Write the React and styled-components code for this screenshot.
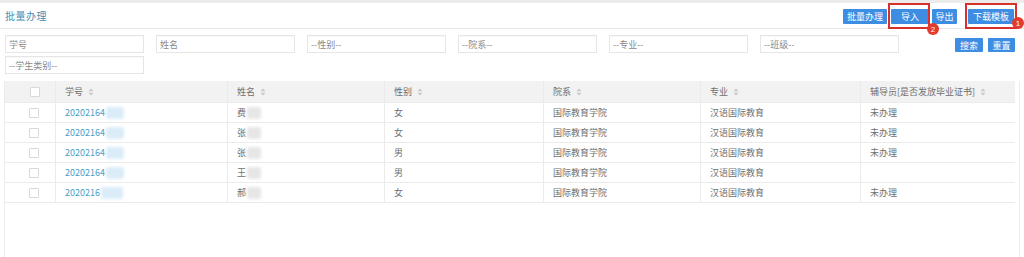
import React from 'react';
import styled, { createGlobalStyle } from 'styled-components';

const GlobalStyle = createGlobalStyle`
  body {
    margin: 0;
    background: #fff;
    font-family: "Noto Sans CJK SC", "Noto Sans", sans-serif;
    color: #707070;
  }
`;

const Page = styled.div`
  width: 1024px;
  height: 257px;
  overflow: hidden;
  display: flex;
  flex-direction: column;
`;

const TopStrip = styled.div`
  height: 3px;
  background: #ebebeb;
`;

const Header = styled.div`
  height: 25px;
  display: flex;
  align-items: center;
  justify-content: space-between;
  padding: 0 10px 0 5px;
  border-bottom: 1px solid #e8e8e8;
`;

const Title = styled.div`
  font-size: 10px;
  color: #4a8db3;
  letter-spacing: 0.5px;
`;

const Actions = styled.div`
  display: flex;
  align-items: center;
  margin-top: 2px;
`;

const Button = styled.button`
  height: ${(p) => p.$h || 15}px;
  width: ${(p) => p.$w}px;
  margin-left: ${(p) => p.$ml || 0}px;
  padding: 0;
  border: none;
  border-radius: 1px;
  background: #3d8de3;
  color: #fff;
  font-family: inherit;
  font-size: 9px;
  line-height: 1;
  display: flex;
  align-items: center;
  justify-content: center;
`;

const Marked = styled.div`
  position: relative;
  margin-left: ${(p) => p.$ml || 0}px;
  display: flex;
`;

const Frame = styled.div`
  position: absolute;
  left: -3px;
  right: ${(p) => p.$r}px;
  top: -6px;
  bottom: -5px;
  border: 2px solid #d8302b;
  pointer-events: none;
`;

const Badge = styled.div`
  position: absolute;
  right: -10px;
  top: ${(p) => p.$t}px;
  width: 12px;
  height: 12px;
  border-radius: 50%;
  background: #e23a2f;
  color: #fff;
  font-size: 8px;
  font-family: "Liberation Sans", sans-serif;
  display: flex;
  align-items: center;
  justify-content: center;
`;

const Filters = styled.div`
  padding: 6px 9px 0 5px;
  display: flex;
  flex-direction: column;
  gap: 3px;
`;

const FilterRow = styled.div`
  display: flex;
  align-items: center;
  gap: 12px;
`;

const Field = styled.div`
  width: 139px;
  height: 18px;
  box-sizing: border-box;
  border: 1px solid #e6e6e6;
  box-shadow: inset 0 1px 1px rgba(0, 0, 0, 0.03);
  padding-left: 3px;
  font-size: 9px;
  color: #8a8a8a;
  display: flex;
  align-items: center;
`;

const SearchGroup = styled.div`
  display: flex;
  gap: 5px;
  margin-left: auto;
  margin-top: 2px;
`;

const TablePanel = styled.div`
  flex: 1;
  margin: 7px 4px 0 4px;
  border-left: 1px solid #ececec;
  border-right: 1px solid #ececec;
`;

const Table = styled.div`
  width: 1010px;
  border-bottom: 1px solid #eaeaea;
`;

const Row = styled.div`
  display: grid;
  grid-template-columns: 50px 172px 157px 159px 157px 160px 155px;
  height: ${(p) => (p.$head ? 21 : 20)}px;
  background: ${(p) => (p.$head ? '#f2f2f2' : '#fff')};
  border-top: ${(p) => (p.$head ? 'none' : '1px solid #ebebeb')};
  box-sizing: border-box;
`;

const Cell = styled.div`
  display: flex;
  align-items: center;
  padding-left: ${(p) => (p.$center ? 0 : 9)}px;
  justify-content: ${(p) => (p.$center ? 'center' : 'flex-start')};
  border-left: ${(p) => (p.$first ? 'none' : '1px solid #ebebeb')};
  font-size: 9px;
  color: ${(p) => (p.$link ? '#45a0c8' : '#6e6e6e')};
  white-space: nowrap;
`;

const Check = styled.span`
  width: 10px;
  height: 10px;
  box-sizing: border-box;
  border: 1px solid #d8d8d8;
  border-radius: 1px;
  background: #fff;
  margin-left: ${(p) => (p.$head ? 10 : 8)}px;
`;

const Smudge = styled.span`
  display: inline-block;
  width: ${(p) => p.$w}px;
  height: 12px;
  margin-left: 1px;
  border-radius: 3px;
  background: ${(p) => (p.$blue ? '#dbecf9' : '#e6e6e6')};
  filter: blur(1.5px);
`;

const SortIcon = () => (
  <svg width="6" height="8" viewBox="0 0 6 8" style={{ marginLeft: 5 }}>
    <path d="M3 0.5 L5.5 3.2 H0.5 Z" fill="#c8c8c8" />
    <path d="M3 7.5 L5.5 4.8 H0.5 Z" fill="#c8c8c8" />
  </svg>
);

const columns = ['学号', '姓名', '性别', '院系', '专业', '辅导员[是否发放毕业证书]'];

const students = [
  { id: '20202164', name: '费', sex: '女', status: '未办理' },
  { id: '20202164', name: '张', sex: '女', status: '未办理' },
  { id: '20202164', name: '张', sex: '男', status: '未办理' },
  { id: '20202164', name: '王', sex: '男', status: '' },
  { id: '2020216', name: '郝', sex: '女', status: '未办理' },
];

const App = () => {
  return (
    <Page>
      <GlobalStyle />
      <TopStrip />
      <Header>
        <Title>批量办理</Title>
        <Actions>
          <Button $w={44}>批量办理</Button>
          <Marked $ml={4}>
            <Button $w={38}>导入</Button>
            <Frame $r={-1} />
            <Badge $t={14}>2</Badge>
          </Marked>
          <Button $w={25} $ml={3}>导出</Button>
          <Marked $ml={11}>
            <Button $w={46}>下载模板</Button>
            <Frame $r={-3} />
            <Badge $t={8}>1</Badge>
          </Marked>
        </Actions>
      </Header>
      <Filters>
        <FilterRow>
          <Field>学号</Field>
          <Field>姓名</Field>
          <Field>--性别--</Field>
          <Field>--院系--</Field>
          <Field>--专业--</Field>
          <Field>--班级--</Field>
          <SearchGroup>
            <Button $w={28} $h={14}>搜索</Button>
            <Button $w={27} $h={14}>重置</Button>
          </SearchGroup>
        </FilterRow>
        <FilterRow>
          <Field>--学生类别--</Field>
        </FilterRow>
      </Filters>
      <TablePanel>
        <Table>
          <Row $head>
            <Cell $first $center>
              <Check $head />
            </Cell>
            {columns.map((c) => (
              <Cell key={c}>
                {c}
                <SortIcon />
              </Cell>
            ))}
          </Row>
          {students.map((s, i) => (
            <Row key={i}>
              <Cell $first $center>
                <Check />
              </Cell>
              <Cell $link>
                {s.id}
                <Smudge $blue $w={s.id.length === 8 ? 18 : 22} />
              </Cell>
              <Cell>
                {s.name}
                <Smudge $w={14} />
              </Cell>
              <Cell>{s.sex}</Cell>
              <Cell>国际教育学院</Cell>
              <Cell>汉语国际教育</Cell>
              <Cell>{s.status}</Cell>
            </Row>
          ))}
        </Table>
      </TablePanel>
    </Page>
  );
};

export default App;
